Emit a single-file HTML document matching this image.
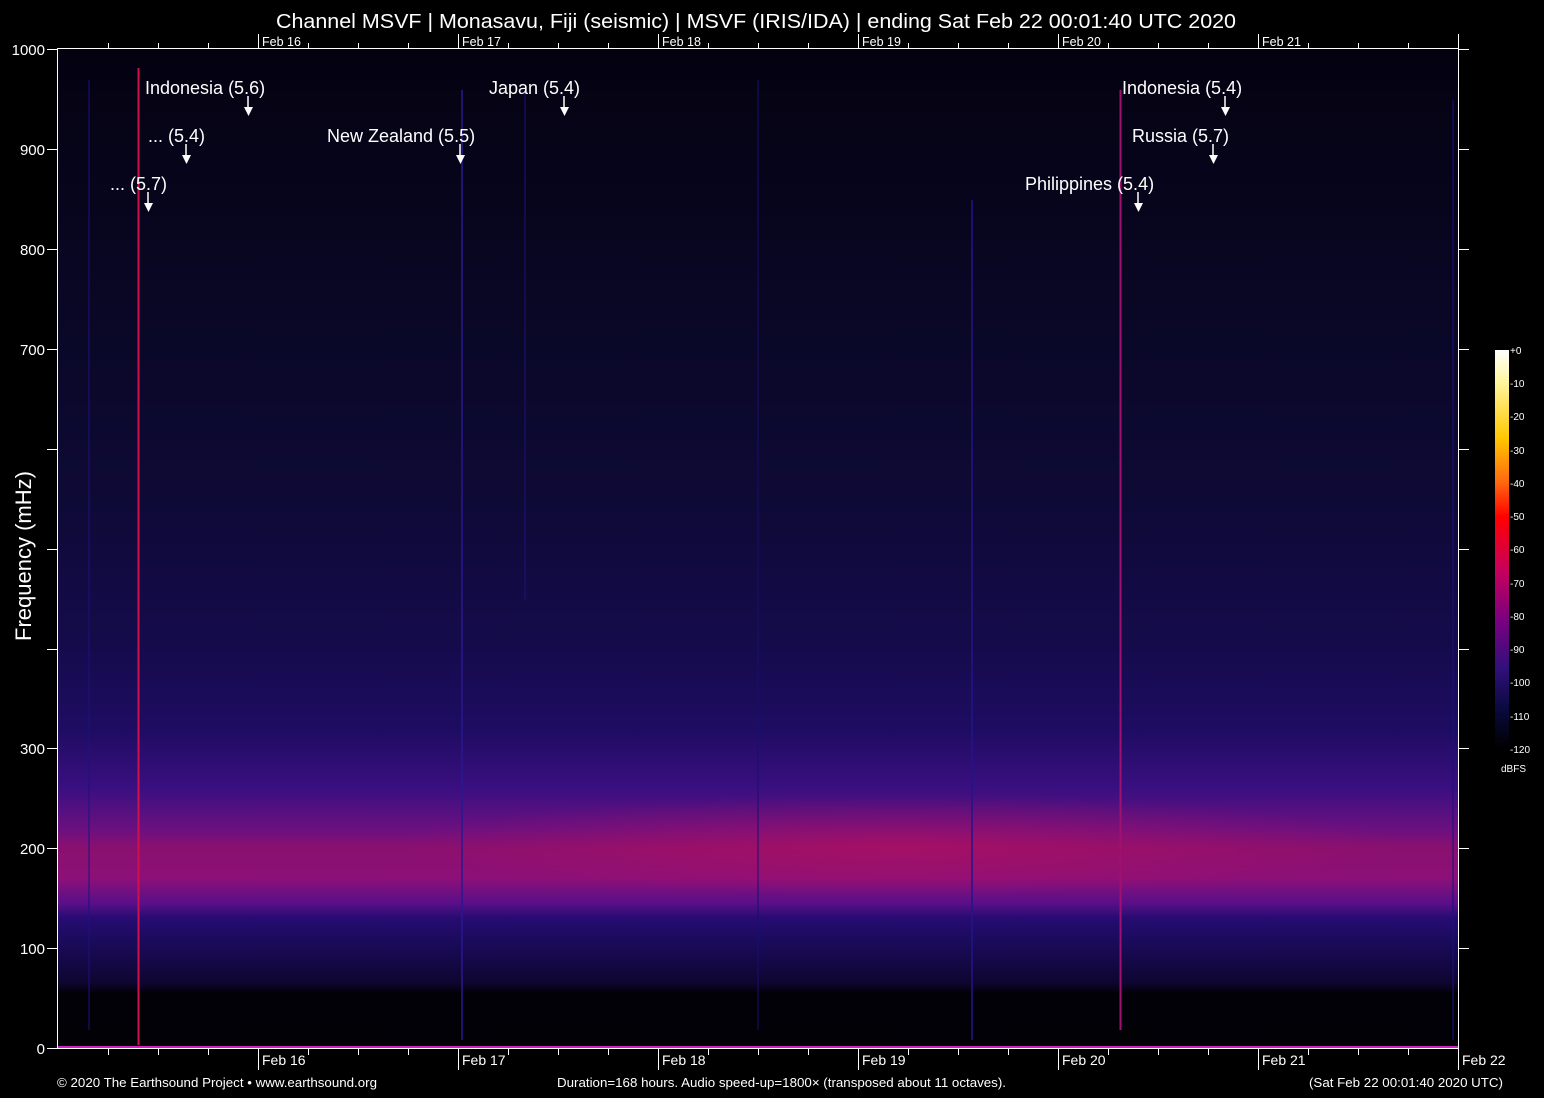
<!DOCTYPE html>
<html><head><meta charset="utf-8"><style>
html,body{margin:0;padding:0;background:#000;width:1544px;height:1098px;overflow:hidden}
svg{display:block}
text{font-family:"Liberation Sans",Arial,sans-serif;fill:#fff}
</style></head><body>
<svg width="1544" height="1098" viewBox="0 0 1544 1098" xmlns="http://www.w3.org/2000/svg">
<defs>
<linearGradient id="sp" x1="0" y1="49" x2="0" y2="1048" gradientUnits="userSpaceOnUse">
<stop offset="0" stop-color="#040210"/>
<stop offset="0.25" stop-color="#090724"/>
<stop offset="0.45" stop-color="#0e0a36"/>
<stop offset="0.6" stop-color="#150b4c"/>
<stop offset="0.68" stop-color="#1e0c62"/>
<stop offset="0.74" stop-color="#3a0f80"/>
<stop offset="0.78" stop-color="#6a1080"/>
<stop offset="0.80" stop-color="#8a106f"/>
<stop offset="0.83" stop-color="#8c1078"/>
<stop offset="0.855" stop-color="#5a0f88"/>
<stop offset="0.87" stop-color="#260c72"/>
<stop offset="0.9" stop-color="#180a55"/>
<stop offset="0.935" stop-color="#0e0630"/>
<stop offset="0.945" stop-color="#030108"/>
<stop offset="1" stop-color="#020106"/>
</linearGradient>
<radialGradient id="mid" cx="900" cy="845" r="500" gradientUnits="userSpaceOnUse" gradientTransform="translate(900 845) scale(1 0.1) translate(-900 -845)">
<stop offset="0" stop-color="#c0105a" stop-opacity="0.5"/>
<stop offset="1" stop-color="#c0105a" stop-opacity="0"/>
</radialGradient>
<linearGradient id="cb" x1="0" y1="350" x2="0" y2="748" gradientUnits="userSpaceOnUse">
<stop offset="0" stop-color="#ffffff"/>
<stop offset="0.08" stop-color="#fff6a0"/>
<stop offset="0.22" stop-color="#ffc800"/>
<stop offset="0.33" stop-color="#ff6a10"/>
<stop offset="0.42" stop-color="#ff0000"/>
<stop offset="0.55" stop-color="#c8005a"/>
<stop offset="0.68" stop-color="#7a0080"/>
<stop offset="0.8" stop-color="#30107a"/>
<stop offset="0.9" stop-color="#0a0a40"/>
<stop offset="1" stop-color="#000000"/>
</linearGradient>
</defs>
<rect x="58" y="49" width="1400" height="999" fill="url(#sp)"/>
<rect x="58" y="720" width="1400" height="250" fill="url(#mid)"/>
<!-- event lines -->
<line x1="138.5" y1="68" x2="138.5" y2="1045" stroke="#d0104a" stroke-width="2"/>
<line x1="1120.5" y1="90" x2="1120.5" y2="1030" stroke="#a01070" stroke-width="2"/>
<line x1="462" y1="90" x2="462" y2="1040" stroke="#281890" stroke-width="1.5"/>
<line x1="972" y1="200" x2="972" y2="1040" stroke="#22148a" stroke-width="1.5"/>
<line x1="525" y1="90" x2="525" y2="600" stroke="#1a1280" stroke-width="1"/>
<line x1="89" y1="80" x2="89" y2="1030" stroke="#1a1280" stroke-width="1"/>
<line x1="758" y1="80" x2="758" y2="1030" stroke="#150f70" stroke-width="1"/>
<line x1="1453" y1="100" x2="1453" y2="1040" stroke="#1a1280" stroke-width="1"/>
<line x1="58" y1="1047" x2="1458" y2="1047" stroke="#d020c0" stroke-width="2"/>
<!-- axes -->
<g stroke="#fff" stroke-width="1" fill="none">
<line x1="57.5" y1="49" x2="57.5" y2="1049"/>
<line x1="1458.5" y1="49" x2="1458.5" y2="1049"/>
<line x1="57" y1="48.5" x2="1459" y2="48.5"/>
<line x1="57" y1="1048.5" x2="1459" y2="1048.5"/>
<path d="M47 49.5h11M47 149.5h11M47 249.5h11M47 349.5h11M47 449.5h11M47 549.5h11M47 649.5h11M47 748.5h11M47 848.5h11M47 948.5h11M47 1048.5h11"/>
<path d="M1458 49.5h11M1458 149.5h11M1458 249.5h11M1458 349.5h11M1458 449.5h11M1458 549.5h11M1458 649.5h11M1458 748.5h11M1458 848.5h11M1458 948.5h11"/>
<path d="M108.5 1049v6M158.5 1049v6M208.5 1049v6M308.5 1049v6M358.5 1049v6M408.5 1049v6M508.5 1049v6M558.5 1049v6M608.5 1049v6M708.5 1049v6M758.5 1049v6M808.5 1049v6M908.5 1049v6M958.5 1049v6M1008.5 1049v6M1108.5 1049v6M1158.5 1049v6M1208.5 1049v6M1308.5 1049v6M1358.5 1049v6M1408.5 1049v6"/>
<path d="M258.5 1049v21M458.5 1049v21M658.5 1049v21M858.5 1049v21M1058.5 1049v21M1258.5 1049v21M1458.5 1049v21"/>
<path d="M108.5 43v6M158.5 43v6M208.5 43v6M308.5 43v6M358.5 43v6M408.5 43v6M508.5 43v6M558.5 43v6M608.5 43v6M708.5 43v6M758.5 43v6M808.5 43v6M908.5 43v6M958.5 43v6M1008.5 43v6M1108.5 43v6M1158.5 43v6M1208.5 43v6M1308.5 43v6M1358.5 43v6M1408.5 43v6"/>
<path d="M258.5 34v15M458.5 34v15M658.5 34v15M858.5 34v15M1058.5 34v15M1258.5 34v15M1458.5 34v15"/>
</g>
<text x="756" y="28" font-size="20.5" text-anchor="middle" textLength="960" lengthAdjust="spacingAndGlyphs">Channel MSVF | Monasavu, Fiji (seismic) | MSVF (IRIS/IDA) | ending Sat Feb 22 00:01:40 UTC 2020</text>
<g font-size="12.5">
<text x="262" y="46">Feb 16</text><text x="462" y="46">Feb 17</text><text x="662" y="46">Feb 18</text><text x="862" y="46">Feb 19</text><text x="1062" y="46">Feb 20</text><text x="1262" y="46">Feb 21</text>
</g>
<g font-size="14">
<text x="262" y="1065">Feb 16</text><text x="462" y="1065">Feb 17</text><text x="662" y="1065">Feb 18</text><text x="862" y="1065">Feb 19</text><text x="1062" y="1065">Feb 20</text><text x="1262" y="1065">Feb 21</text><text x="1462" y="1065">Feb 22</text>
</g>
<g font-size="15" text-anchor="end">
<text x="45" y="55">1000</text><text x="45" y="155">900</text><text x="45" y="255">800</text><text x="45" y="355">700</text><text x="45" y="754">300</text><text x="45" y="854">200</text><text x="45" y="954">100</text><text x="45" y="1054">0</text>
</g>
<text transform="translate(31 556) rotate(-90)" font-size="22" text-anchor="middle">Frequency (mHz)</text>
<!-- labels -->
<g font-size="18">
<text x="145" y="94">Indonesia (5.6)</text>
<text x="489" y="94">Japan (5.4)</text>
<text x="1122" y="94">Indonesia (5.4)</text>
<text x="148" y="142">... (5.4)</text>
<text x="327" y="142">New Zealand (5.5)</text>
<text x="1132" y="142">Russia (5.7)</text>
<text x="110" y="190">... (5.7)</text>
<text x="1025" y="190">Philippines (5.4)</text>
</g>
<g stroke="#fff" stroke-width="1.5">
<line x1="248" y1="96" x2="248" y2="108"/><line x1="564" y1="96" x2="564" y2="108"/><line x1="1225" y1="96" x2="1225" y2="108"/>
<line x1="186" y1="144" x2="186" y2="156"/><line x1="460" y1="144" x2="460" y2="156"/><line x1="1213" y1="144" x2="1213" y2="156"/>
<line x1="148" y1="192" x2="148" y2="204"/><line x1="1138" y1="192" x2="1138" y2="204"/>
</g>
<g fill="#fff">
<path d="M244 107h9l-4.5 9z"/><path d="M560 107h9l-4.5 9z"/><path d="M1221 107h9l-4.5 9z"/>
<path d="M182 155h9l-4.5 9z"/><path d="M456 155h9l-4.5 9z"/><path d="M1209 155h9l-4.5 9z"/>
<path d="M144 203h9l-4.5 9z"/><path d="M1134 203h9l-4.5 9z"/>
</g>
<!-- colorbar -->
<rect x="1495" y="350" width="14" height="398" fill="url(#cb)"/>
<g font-size="10" fill="#ddd">
<text x="1510" y="354">+0</text><text x="1510" y="387">-10</text><text x="1510" y="420">-20</text><text x="1510" y="454">-30</text><text x="1510" y="487">-40</text><text x="1510" y="520">-50</text><text x="1510" y="553">-60</text><text x="1510" y="587">-70</text><text x="1510" y="620">-80</text><text x="1510" y="653">-90</text><text x="1510" y="686">-100</text><text x="1510" y="720">-110</text><text x="1510" y="753">-120</text>
<text x="1501" y="772">dBFS</text>
</g>
<g font-size="13">
<text x="57" y="1087" textLength="320" lengthAdjust="spacingAndGlyphs">© 2020 The Earthsound Project • www.earthsound.org</text>
<text x="557" y="1087" textLength="449" lengthAdjust="spacingAndGlyphs">Duration=168 hours. Audio speed-up=1800× (transposed about 11 octaves).</text>
<text x="1309" y="1087" textLength="194" lengthAdjust="spacingAndGlyphs">(Sat Feb 22 00:01:40 2020 UTC)</text>
</g>
</svg>
</body></html>
